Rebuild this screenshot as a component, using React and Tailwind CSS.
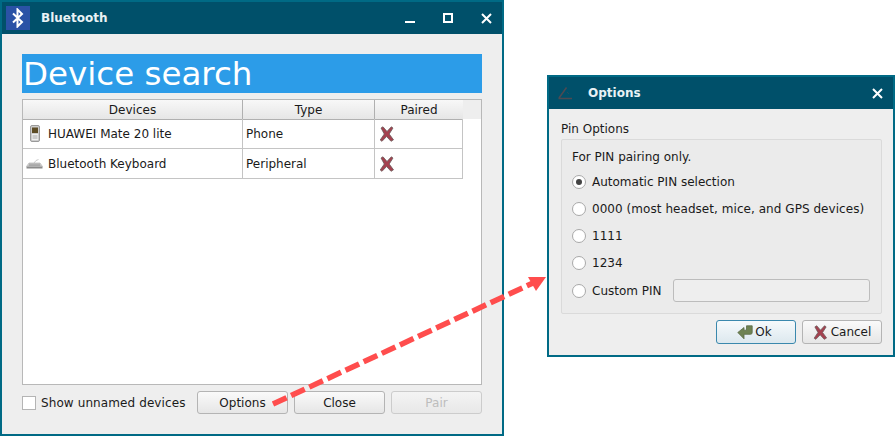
const font = { fontFamily: '"DejaVu Sans", sans-serif' };

function RedX({ size = 16 }) {
  return (
    <svg width={size} height={size} viewBox="0 0 16 16">
      <path d="M4 0.8 L8 5.5 L12.3 0.8 L14 2 L10.2 8 L14.5 13.8 L12 15.3 L7.6 10.5 L3 15.3 L1.2 14 L5.3 8 L2 2 Z" fill="#a5414f" stroke="#6a5a5a" strokeWidth="0.8" strokeLinejoin="round" />
    </svg>
  );
}

function Phone() {
  return (
    <svg width="10" height="17" viewBox="0 0 10 17">
      <rect x="0.5" y="0.5" width="9" height="16" rx="1.5" fill="#cdcdcd" stroke="#9a9a9a" />
      <rect x="2" y="2.5" width="6" height="5.5" fill="#5e4d26" />
      <rect x="2" y="9" width="6" height="6" fill="#f0f0f0" />
      <path d="M2.5 11h5M2.5 13h5" stroke="#a8a8a8" />
    </svg>
  );
}

function Keyboard() {
  return (
    <svg width="17" height="11" viewBox="0 0 17 11">
      <path d="M3 5 L14 5 L16.5 8.5 L0.5 8.5 Z" fill="#d6d6d6" stroke="#a8a8a8" strokeWidth="0.6" />
      <path d="M3 6.2h11M2.5 7.4h12" stroke="#8c8c8c" strokeWidth="0.7" />
      <rect x="0.5" y="8.7" width="16" height="1.8" fill="#8a8a8a" />
      <path d="M8 5 L10 2.5 L12.5 1.5" stroke="#bcbcbc" strokeWidth="0.8" fill="none" />
    </svg>
  );
}

function OkIcon() {
  return (
    <svg width="16" height="15" viewBox="0 0 16 15">
      <path d="M9.5 0.8 L15.2 0.8 L15.2 7.5 C15.2 8.5 14.5 9.3 13.5 9.3 L7 9.3 L7 13.8 L0.8 7.5 L7 2.5 L7 5.2 L9.5 5.2 Z" fill="#6f8353" stroke="#5b6b47" strokeWidth="0.8" strokeLinejoin="round" />
    </svg>
  );
}

function Btn({ children, className = "", disabled = false }) {
  return (
    <div className={`flex items-center justify-center rounded-[3px] border text-[12px] bg-gradient-to-b ${disabled ? "border-[#cccccc] from-[#f4f4f4] to-[#e8e8e8] text-[#bdbdbd]" : "border-[#b4b4b4] from-[#fafafa] to-[#e6e6e6] text-[#1a1a1a]"} ${className}`}>
      {children}
    </div>
  );
}

function Radio({ checked, children, className = "" }) {
  return (
    <div className={`flex items-center h-[14px] text-[12px] text-[#1a1a1a] ${className}`}>
      <div className="w-[14px] h-[14px] rounded-full border border-[#a9a9a9] bg-white flex items-center justify-center shrink-0">
        {checked && <div className="w-[6px] h-[6px] rounded-full bg-[#444444]" />}
      </div>
      <span className="ml-[6px] whitespace-nowrap">{children}</span>
    </div>
  );
}

function Row({ icon, name, type }) {
  return (
    <div className="grid grid-cols-[220px_132px_88px] h-[30px] w-[440px] text-[12px] text-[#1a1a1a]">
      <div className="flex items-center border-r border-b border-[#c4c4c4]">
        <div className="w-[25px] pr-[2px] flex justify-center">{icon}</div>
        <span className="whitespace-nowrap">{name}</span>
      </div>
      <div className="flex items-center pl-[3px] border-r border-b border-[#c4c4c4]">{type}</div>
      <div className="flex items-center pl-[4px] border-r border-b border-[#c4c4c4]"><RedX /></div>
    </div>
  );
}

export default function App() {
  return (
    <div className="relative w-[895px] h-[436px] bg-white overflow-hidden" style={font}>
      {/* Bluetooth window */}
      <div className="absolute left-0 top-0 w-[504px] h-[436px] flex flex-col border-2 border-[#006a85] bg-[#eeeeee]">
        <div className="flex items-center h-[32px] bg-[#00506a] shrink-0 pl-[4px] pr-[10px]">
          <div className="w-[24px] h-[24px] bg-[#2a52a6] flex items-center justify-center">
            <svg width="12" height="20" viewBox="0 0 12 20">
              <path d="M1 5.5 L10 14 L5.5 18.5 L5.5 1.5 L10 6 L1 14.5" fill="none" stroke="white" strokeWidth="2" />
            </svg>
          </div>
          <span className="ml-[11px] text-[12px] font-bold text-[#e8f2f5]">Bluetooth</span>
          <div className="ml-auto flex items-center">
            <div className="w-[10px] h-[2px] bg-white mt-[7px] mr-[28px]" />
            <div className="w-[10px] h-[10px] border-2 border-white mr-[28px]" />
            <svg width="11" height="11" viewBox="0 0 11 11"><path d="M1 1 L10 10 M10 1 L1 10" stroke="white" strokeWidth="2" /></svg>
          </div>
        </div>
        <div className="flex flex-col flex-1 px-[20px] pt-[20px] pb-[20px]">
          <div className="h-[39px] bg-[#2c9ce8] text-white text-[32.5px] leading-[39px] pt-[1px] pl-[1px] whitespace-nowrap">Device search</div>
          <div className="mt-[6px] h-[286px] border border-[#b8b8b8] bg-white">
            <div className="flex h-[19px] bg-[#eeeeee]">
              <div className="grid grid-cols-[220px_132px_88px] w-[440px] text-[12px] text-[#1a1a1a] bg-gradient-to-b from-[#f8f8f8] to-[#e6e6e6]">
                <div className="flex items-center justify-center pt-[1px] border-r border-b border-[#b0b0b0]">Devices</div>
                <div className="flex items-center justify-center pt-[1px] border-r border-b border-[#b0b0b0]">Type</div>
                <div className="flex items-center justify-center pt-[1px] border-b border-[#b0b0b0]">Paired</div>
              </div>
            </div>
            <Row icon={<Phone />} name="HUAWEI Mate 20 lite" type="Phone" />
            <Row icon={<Keyboard />} name="Bluetooth Keyboard" type="Peripheral" />
          </div>
          <div className="mt-[6px] flex items-center text-[12px] text-[#1a1a1a]">
            <div className="w-[14px] h-[14px] border border-[#b4b4b4] bg-white" />
            <span className="ml-[5px] whitespace-nowrap tracking-[0.1px]">Show unnamed devices</span>
            <div className="ml-auto flex gap-[6px]">
              <Btn className="w-[91px] h-[23px]">Options</Btn>
              <Btn className="w-[91px] h-[23px]">Close</Btn>
              <Btn className="w-[91px] h-[23px]" disabled>Pair</Btn>
            </div>
          </div>
        </div>
      </div>

      {/* Options window */}
      <div className="absolute left-[547px] top-[75px] w-[348px] h-[282px] flex flex-col border-2 border-[#006a85] bg-[#eeeeee]">
        <div className="flex items-center h-[32px] bg-[#00506a] shrink-0 pl-[9px] pr-[10px]">
          <svg width="15" height="14" viewBox="0 0 15 14">
            <path d="M0.5 12.5 L14 12.5 M1 12 L8.5 1.5" stroke="#4d4a52" strokeWidth="1.5" fill="none" />
            <path d="M9.5 6.5 L10.5 7.5" stroke="#4d4a52" strokeWidth="1" />
          </svg>
          <span className="ml-[15px] text-[12px] font-bold text-[#e8f2f5]">Options</span>
          <svg className="ml-auto" width="11" height="11" viewBox="0 0 11 11"><path d="M1 1 L10 10 M10 1 L1 10" stroke="white" strokeWidth="2" /></svg>
        </div>
        <div className="flex flex-col flex-1 pl-[12px]">
          <div className="text-[12px] text-[#1a1a1a] mt-[13px] h-[15px] leading-[15px]">Pin Options</div>
          <div className="mt-[2px] w-[321px] h-[175px] border border-[#dadada] rounded-[2px] bg-[#ebebeb] pl-[10px] pt-[10px]">
            <div className="text-[12px] text-[#1a1a1a] h-[14px] leading-[14px]">For PIN pairing only.</div>
            <Radio checked className="mt-[11px]">Automatic PIN selection</Radio>
            <Radio className="mt-[13px] tracking-[0.05px]">0000 (most headset, mice, and GPS devices)</Radio>
            <Radio className="mt-[13px]">1111</Radio>
            <Radio className="mt-[13px]">1234</Radio>
            <div className="flex items-center mt-[9px]">
              <Radio>Custom PIN</Radio>
              <div className="ml-[11px] w-[197px] h-[23px] border border-[#bcbcbc] rounded-[3px] bg-[#eeeeee]" />
            </div>
          </div>
          <div className="mt-[6px] w-[321px] flex justify-end gap-[6px]">
            <Btn className="w-[80px] h-[24px] pr-[3px] !border-[#3a88ad] !from-[#f6fafc] !to-[#dce8ee]">
              <OkIcon /><span className="ml-[2px]">Ok</span>
            </Btn>
            <Btn className="w-[80px] h-[24px]">
              <RedX size={15} /><span className="ml-[3px]">Cancel</span>
            </Btn>
          </div>
        </div>
      </div>

      {/* Annotation arrow */}
      <svg className="absolute left-0 top-0 pointer-events-none" width="895" height="436" viewBox="0 0 895 436">
        <path d="M273 404 L533 283" stroke="#ff4d4d" strokeWidth="5.5" strokeDasharray="15 5" fill="none" />
        <path d="M546 277 L528 277 L536 291 Z" fill="#ff4d4d" />
      </svg>
    </div>
  );
}
